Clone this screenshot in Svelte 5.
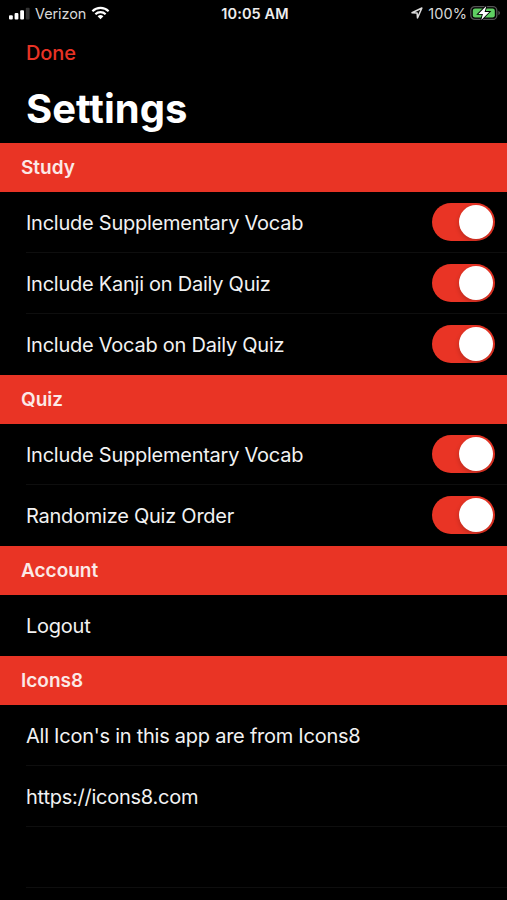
<script lang="ts">
  type Row = { label: string; toggle?: boolean; on?: boolean };
  type Section = { title: string; rows: Row[] };

  let sections: Section[] = $state([
    {
      title: "Study",
      rows: [
        { label: "Include Supplementary Vocab", toggle: true, on: true },
        { label: "Include Kanji on Daily Quiz", toggle: true, on: true },
        { label: "Include Vocab on Daily Quiz", toggle: true, on: true },
      ],
    },
    {
      title: "Quiz",
      rows: [
        { label: "Include Supplementary Vocab", toggle: true, on: true },
        { label: "Randomize Quiz Order", toggle: true, on: true },
      ],
    },
    { title: "Account", rows: [{ label: "Logout" }] },
    {
      title: "Icons8",
      rows: [
        { label: "All Icon's in this app are from Icons8" },
        { label: "https://icons8.com" },
        { label: "" },
      ],
    },
  ]);
</script>

<main class="screen">
  <div class="status">
    <div class="carrier">
      <svg class="signal" width="21" height="13" viewBox="0 0 21 13">
        <rect x="0" y="8.2" width="3.8" height="4.3" rx="1" fill="#fff" />
        <rect x="5.6" y="6" width="3.8" height="6.5" rx="1" fill="#fff" />
        <rect x="11.2" y="3.2" width="3.8" height="9.3" rx="1" fill="#fff" />
        <rect x="16.8" y="0.8" width="3.8" height="11.7" rx="1" fill="#333" />
      </svg>
      <span>Verizon</span>
      <svg class="wifi" width="19" height="14" viewBox="0 0 20 15">
        <g fill="none" stroke="#fff" stroke-width="2.3">
          <path d="M1.3 5.6a12.4 12.4 0 0 1 17.4 0" />
          <path d="M4.5 8.9a7.8 7.8 0 0 1 11 0" />
        </g>
        <path d="M10 14.2 6.9 11.1a4.5 4.5 0 0 1 6.2 0z" fill="#fff" />
      </svg>
    </div>
    <div class="time">10:05 AM</div>
    <div class="power">
      <svg class="location" width="12" height="12" viewBox="0 0 12 12">
        <path d="M1 5.7 10.9 1 6.5 10.9 6.1 6z" fill="none" stroke="#ddd" stroke-width="1.5" stroke-linejoin="round" />
      </svg>
      <span>100%</span>
      <svg class="battery" width="31" height="16" viewBox="0 0 31 16">
        <rect x="0.8" y="1.6" width="26" height="12.8" rx="4" fill="none" stroke="#555" stroke-width="1.3" />
        <rect x="2.8" y="3.6" width="22" height="8.8" rx="2.2" fill="#5fcf62" />
        <path d="M28.4 5.7c2.1 1 2.1 3.6 0 4.6z" fill="#555" />
        <path d="M16.3 1 8.4 8.9h4.5L11.3 15l7.9-8h-4.6z" fill="#fff" stroke="#000" stroke-width="1.8" paint-order="stroke" />
      </svg>
    </div>
  </div>

  <nav>
    <button class="done">Done</button>
    <h1>Settings</h1>
  </nav>

  {#each sections as section}
    <section>
      <h2>{section.title}</h2>
      {#each section.rows as row}
        <div class="row">
          <span>{row.label}</span>
          {#if row.toggle}
            <button
              class="switch"
              class:on={row.on}
              role="switch"
              aria-checked={row.on}
              aria-label={row.label}
              onclick={() => (row.on = !row.on)}
            ></button>
          {/if}
        </div>
      {/each}
    </section>
  {/each}
</main>

<style>
  :global(body) {
    margin: 0;
    background: #000;
  }

  .screen {
    width: 100%;
    height: 900px;
    overflow: hidden;
    background: #000;
    color: #f2f2f2;
    font-family: Inter, "Liberation Sans", sans-serif;
  }

  button {
    border: 0;
    padding: 0;
    font: inherit;
    cursor: pointer;
  }

  .status {
    display: grid;
    grid-template-columns: 1fr auto 1fr;
    align-items: center;
    height: 28px;
    padding: 0 6px 2px 9px;
    box-sizing: border-box;
    font-size: 14.5px;
    color: #d8d8d8;
  }

  .carrier,
  .power {
    display: flex;
    align-items: center;
  }

  .carrier span {
    margin: 0 5px;
    letter-spacing: -0.1px;
  }

  .wifi {
    margin-bottom: 1px;
  }

  .power {
    justify-content: flex-end;
  }

  .power span {
    margin: 0 3px 0 5px;
    letter-spacing: 0.1px;
  }

  .time {
    font-weight: 600;
    letter-spacing: 0.1px;
    color: #eee;
  }

  nav {
    height: 115px;
    padding-left: 26px;
    box-sizing: border-box;
  }

  .done {
    display: block;
    height: 49px;
    background: none;
    color: #e93325;
    font-size: 20px;
    font-weight: 500;
    letter-spacing: -0.1px;
  }

  h1 {
    margin: 0;
    line-height: 64px;
    font-size: 40px;
    font-weight: 700;
    color: #fff;
  }

  h2 {
    margin: 0;
    padding-left: 21px;
    line-height: 49px;
    font-size: 19px;
    font-weight: 600;
    background: #e93425;
    color: #fbe9e7;
  }

  .row {
    display: flex;
    align-items: center;
    justify-content: space-between;
    height: 60px;
    margin-left: 26px;
    padding-right: 12px;
    border-bottom: 1px solid #0e0e0e;
    font-size: 20px;
    letter-spacing: -0.25px;
  }

  .row span {
    padding-top: 2px;
  }

  .row:last-child {
    border-color: #000;
  }

  section:last-child .row {
    border-color: #0e0e0e;
  }

  .switch {
    display: flex;
    align-items: center;
    width: 63px;
    height: 38px;
    padding: 0 2px;
    border-radius: 19px;
    background: #39393d;
  }

  .switch.on {
    justify-content: flex-end;
    background: #e93425;
  }

  .switch::before {
    content: "";
    width: 34px;
    height: 34px;
    border-radius: 50%;
    background: #fff;
    box-shadow: 0 2px 5px rgba(0, 0, 0, 0.2);
  }
</style>
